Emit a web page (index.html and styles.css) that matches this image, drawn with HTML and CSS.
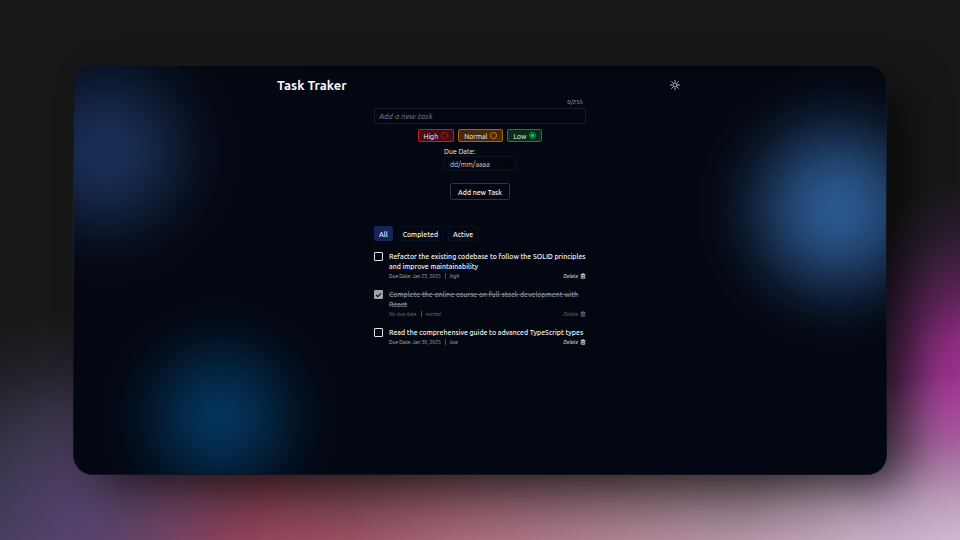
FILE: index.html
```html
<!DOCTYPE html>
<html lang="en">
<head>
<meta charset="utf-8">
<meta name="viewport" content="width=device-width, initial-scale=1">
<title>Task Traker</title>
<link rel="stylesheet" href="styles.css">
</head>
<body>
<svg class="symbols" aria-hidden="true">
  <symbol id="trash" viewBox="0 0 24 24"><path d="M3 6h18M9 6V3h6v3M5 6v15h14V6M10 10v7M14 10v7" fill="none" stroke="currentColor" stroke-width="3"/></symbol>
</svg>
<div class="window">
  <div class="shell">
    <header class="header">
      <h1>Task Traker</h1>
      <button class="theme" type="button" aria-label="Toggle theme">
        <svg viewBox="0 0 24 24" fill="none" stroke="currentColor" stroke-width="2" stroke-linecap="round"><circle cx="12" cy="12" r="5"/><path d="M12 1v3M12 20v3M1 12h3M20 12h3M4 4l2.500 2.500M17.500 17.500L20 20M4 20l2.500-2.500M17.500 6.500L20 4"/></svg>
      </button>
    </header>
    <main class="content">
      <form class="form">
        <span class="counter">0/255</span>
        <input class="field task-input" type="text" placeholder="Add a new task" aria-label="Add a new task" maxlength="255">
        <div class="priorities">
          <label class="priority high">High <input type="radio" name="priority"></label>
          <label class="priority normal">Normal <input type="radio" name="priority"></label>
          <label class="priority low">Low <input type="radio" name="priority" checked></label>
        </div>
        <div class="due">
          <label for="due">Due Date:</label>
          <div class="date-box">
            <input class="field date" id="due" type="text" placeholder="dd/mm/aaaa">
            <svg viewBox="0 0 24 24" fill="none" stroke="currentColor" stroke-width="3"><path d="M4 5h16v16H4zM4 8h16M8 2v4M16 2v4"/></svg>
          </div>
        </div>
        <button class="add" type="button">Add new Task</button>
      </form>
      <nav class="filters">
        <button class="filter selected" type="button">All</button>
        <button class="filter" type="button">Completed</button>
        <button class="filter" type="button">Active</button>
      </nav>
      <ul class="tasks">
        <li class="task">
          <input type="checkbox" id="t1">
          <div class="body">
            <label for="t1">Refactor the existing codebase to follow the SOLID principles and improve maintainability</label>
            <div class="meta"><span>Due Date: Jan 23, 2025</span><i class="level">high</i>
              <button class="delete" type="button">Delete <svg><use href="#trash"/></svg></button></div>
          </div>
        </li>
        <li class="task done">
          <input type="checkbox" id="t2" checked>
          <div class="body">
            <label for="t2">Complete the online course on full-stack development with React</label>
            <div class="meta"><span>No due date</span><i class="level">normal</i>
              <button class="delete" type="button">Delete <svg><use href="#trash"/></svg></button></div>
          </div>
        </li>
        <li class="task">
          <input type="checkbox" id="t3">
          <div class="body">
            <label for="t3">Read the comprehensive guide to advanced TypeScript types</label>
            <div class="meta"><span>Due Date: Jan 30, 2025</span><i class="level">low</i>
              <button class="delete" type="button">Delete <svg><use href="#trash"/></svg></button></div>
          </div>
        </li>
      </ul>
    </main>
  </div>
</div>
</body>
</html>
```
FILE: styles.css
```css
* { box-sizing: border-box; }
body {
  margin: 0;
  min-height: 100vh;
  display: grid;
  padding: 65px 73px;
  font-family: Ubuntu, "Noto Sans", sans-serif;
  font-size: 7px;
  line-height: 10px;
  color: #f5f6fa;
  background:
    radial-gradient(ellipse 220px 190px at 100% 104%, #d6c0d6, #d0b8d0aa 35%, #d0b8d044 65%, transparent),
    radial-gradient(ellipse 170px 210px at 102% 72%, #a83098, #a83098cc 25%, #8e2b8688 50%, #5b2c6c44 75%, transparent),
    radial-gradient(ellipse 190px 210px at 8% 96%, #4c4270bb, #40406088 45%, #28344833 75%, transparent),
    linear-gradient(#171717 58%, #171717dd 70%, #17171766 88%, transparent 100%),
    linear-gradient(90deg, #4c3c5a, #80466c 11%, #a84668 17%, #96445a 27%, #985060 36%, #a86878 48%, #b090a0 74%, #c0a4b8);
}
button, input { font: inherit; color: inherit; margin: 0; }
.symbols { display: none; }
.window {
  border: 1px solid #151827aa;
  border-radius: 20px;
  background:
    radial-gradient(circle 144px at 94% 35%, #2b588f, #2b588ff0 15%, #2b588fbb 33%, #2b588f77 50%, #2b588f33 68%, #2b588f0d 85%, transparent),
    radial-gradient(circle 140px at 4% 21%, #192f56, #192f56f0 15%, #192f56bb 33%, #192f5677 50%, #192f5633 68%, #192f560d 85%, transparent),
    radial-gradient(circle 124px at 18% 86%, #033259, #033259f0 15%, #033259bb 33%, #03325977 50%, #03325933 68%, #0332590d 85%, transparent),
    #030711;
  box-shadow: 24px 16px 44px -6px #0009;
}
.shell { width: 50%; margin: 0 auto; padding: 11px 0; }
.header { display: flex; justify-content: space-between; align-items: center; height: 16px; padding-right: 3px; }
h1 { margin: 0; font-size: 13px; line-height: 16px; font-weight: 600; }
.theme, .delete { border: 0; padding: 0; background: none; }
.theme { height: 10px; color: #d4d6dc; }
.theme svg { width: 10px; height: 10px; display: block; }
.content { width: 212px; max-width: 100%; margin: 0 auto; }
.form { display: flex; flex-direction: column; align-items: center; }
.counter { align-self: flex-end; margin: 4px 3px 1px; font-size: 6px; color: #b9bfcc; }
.field { background: transparent; border: 1px solid #151b2a; border-radius: 2px; padding: 0 4px; outline: 0; }
.task-input { width: 100%; height: 16px; font-size: 8px; font-style: italic; }
.field::placeholder { color: #777e8e; opacity: 1; }
.priorities { display: flex; gap: 4px; margin-top: 5px; }
.priority { display: flex; align-items: center; gap: 3px; height: 13px; padding: 0 5px; border: 1px solid; border-radius: 2px; }
.priority input { appearance: none; width: 7px; height: 7px; border: 1px solid; border-radius: 50%; }
.high { border-color: #c31f2b; background: #490a12; }
.high input { color: #a71c29; }
.normal { border-color: #a86608; background: #4a2806; }
.normal input { color: #c78207; }
.low { border-color: #07883b; background: #052e1c; }
.low input { color: #08ad48; background: radial-gradient(circle, #12d65b 35%, transparent 50%); }
.due { margin-top: 4px; }
.due label { display: block; }
.date-box { display: flex; align-items: center; border: 1px solid #10141f; border-radius: 2px; height: 15px; padding-right: 5px; }
.date { width: 59px; border: 0; padding: 0 5px; }
.date::placeholder { color: #d3d6dc; }
.date-box svg { width: 6px; height: 6px; color: #000; }
.add, .filter { background: transparent; border: 1px solid #303441; border-radius: 2px; font-weight: 500; }
.add { height: 17px; margin-top: 12px; padding: 0 7px; }
.filters { display: flex; gap: 5px; margin-top: 26px; }
.filter { height: 15px; padding: 0 4px; border-color: #0b101d; }
.filter.selected { background: #17245a; border-color: #17245a; }
.tasks { list-style: none; margin: 10px 0 0; padding: 0; display: grid; gap: 8px; }
.task { display: flex; gap: 6px; }
.task input { appearance: none; flex: none; width: 9px; height: 9px; margin-top: 1px; border: 1px solid #e4e5e9; border-radius: 1px; }
.task input:checked { background: #a2a3a9; border-color: #a2a3a9; position: relative; }
.task input:checked::after { content: ""; position: absolute; left: 2px; top: 1px; width: 2px; height: 4px; border: solid #030711; border-width: 0 1px 1px 0; transform: rotate(45deg); }
.body { flex: 1; }
.body label { display: block; margin-right: -4px; font-weight: 500; }
.meta { display: flex; font-size: 5px; line-height: 10px; color: #b4b8c2; align-items: center; }
.level { margin-left: 4px; padding-left: 4px; border-left: 1px solid #4a4e59; line-height: 6px; }
.delete { display: flex; gap: 2px; align-items: center; margin-left: auto; font-style: italic; color: #f0f1f5; }
.delete svg { width: 6px; height: 6px; }
.done label { color: #92959e; text-decoration: line-through #666a74; }
.done .meta, .done .delete { color: #747882; }
```
